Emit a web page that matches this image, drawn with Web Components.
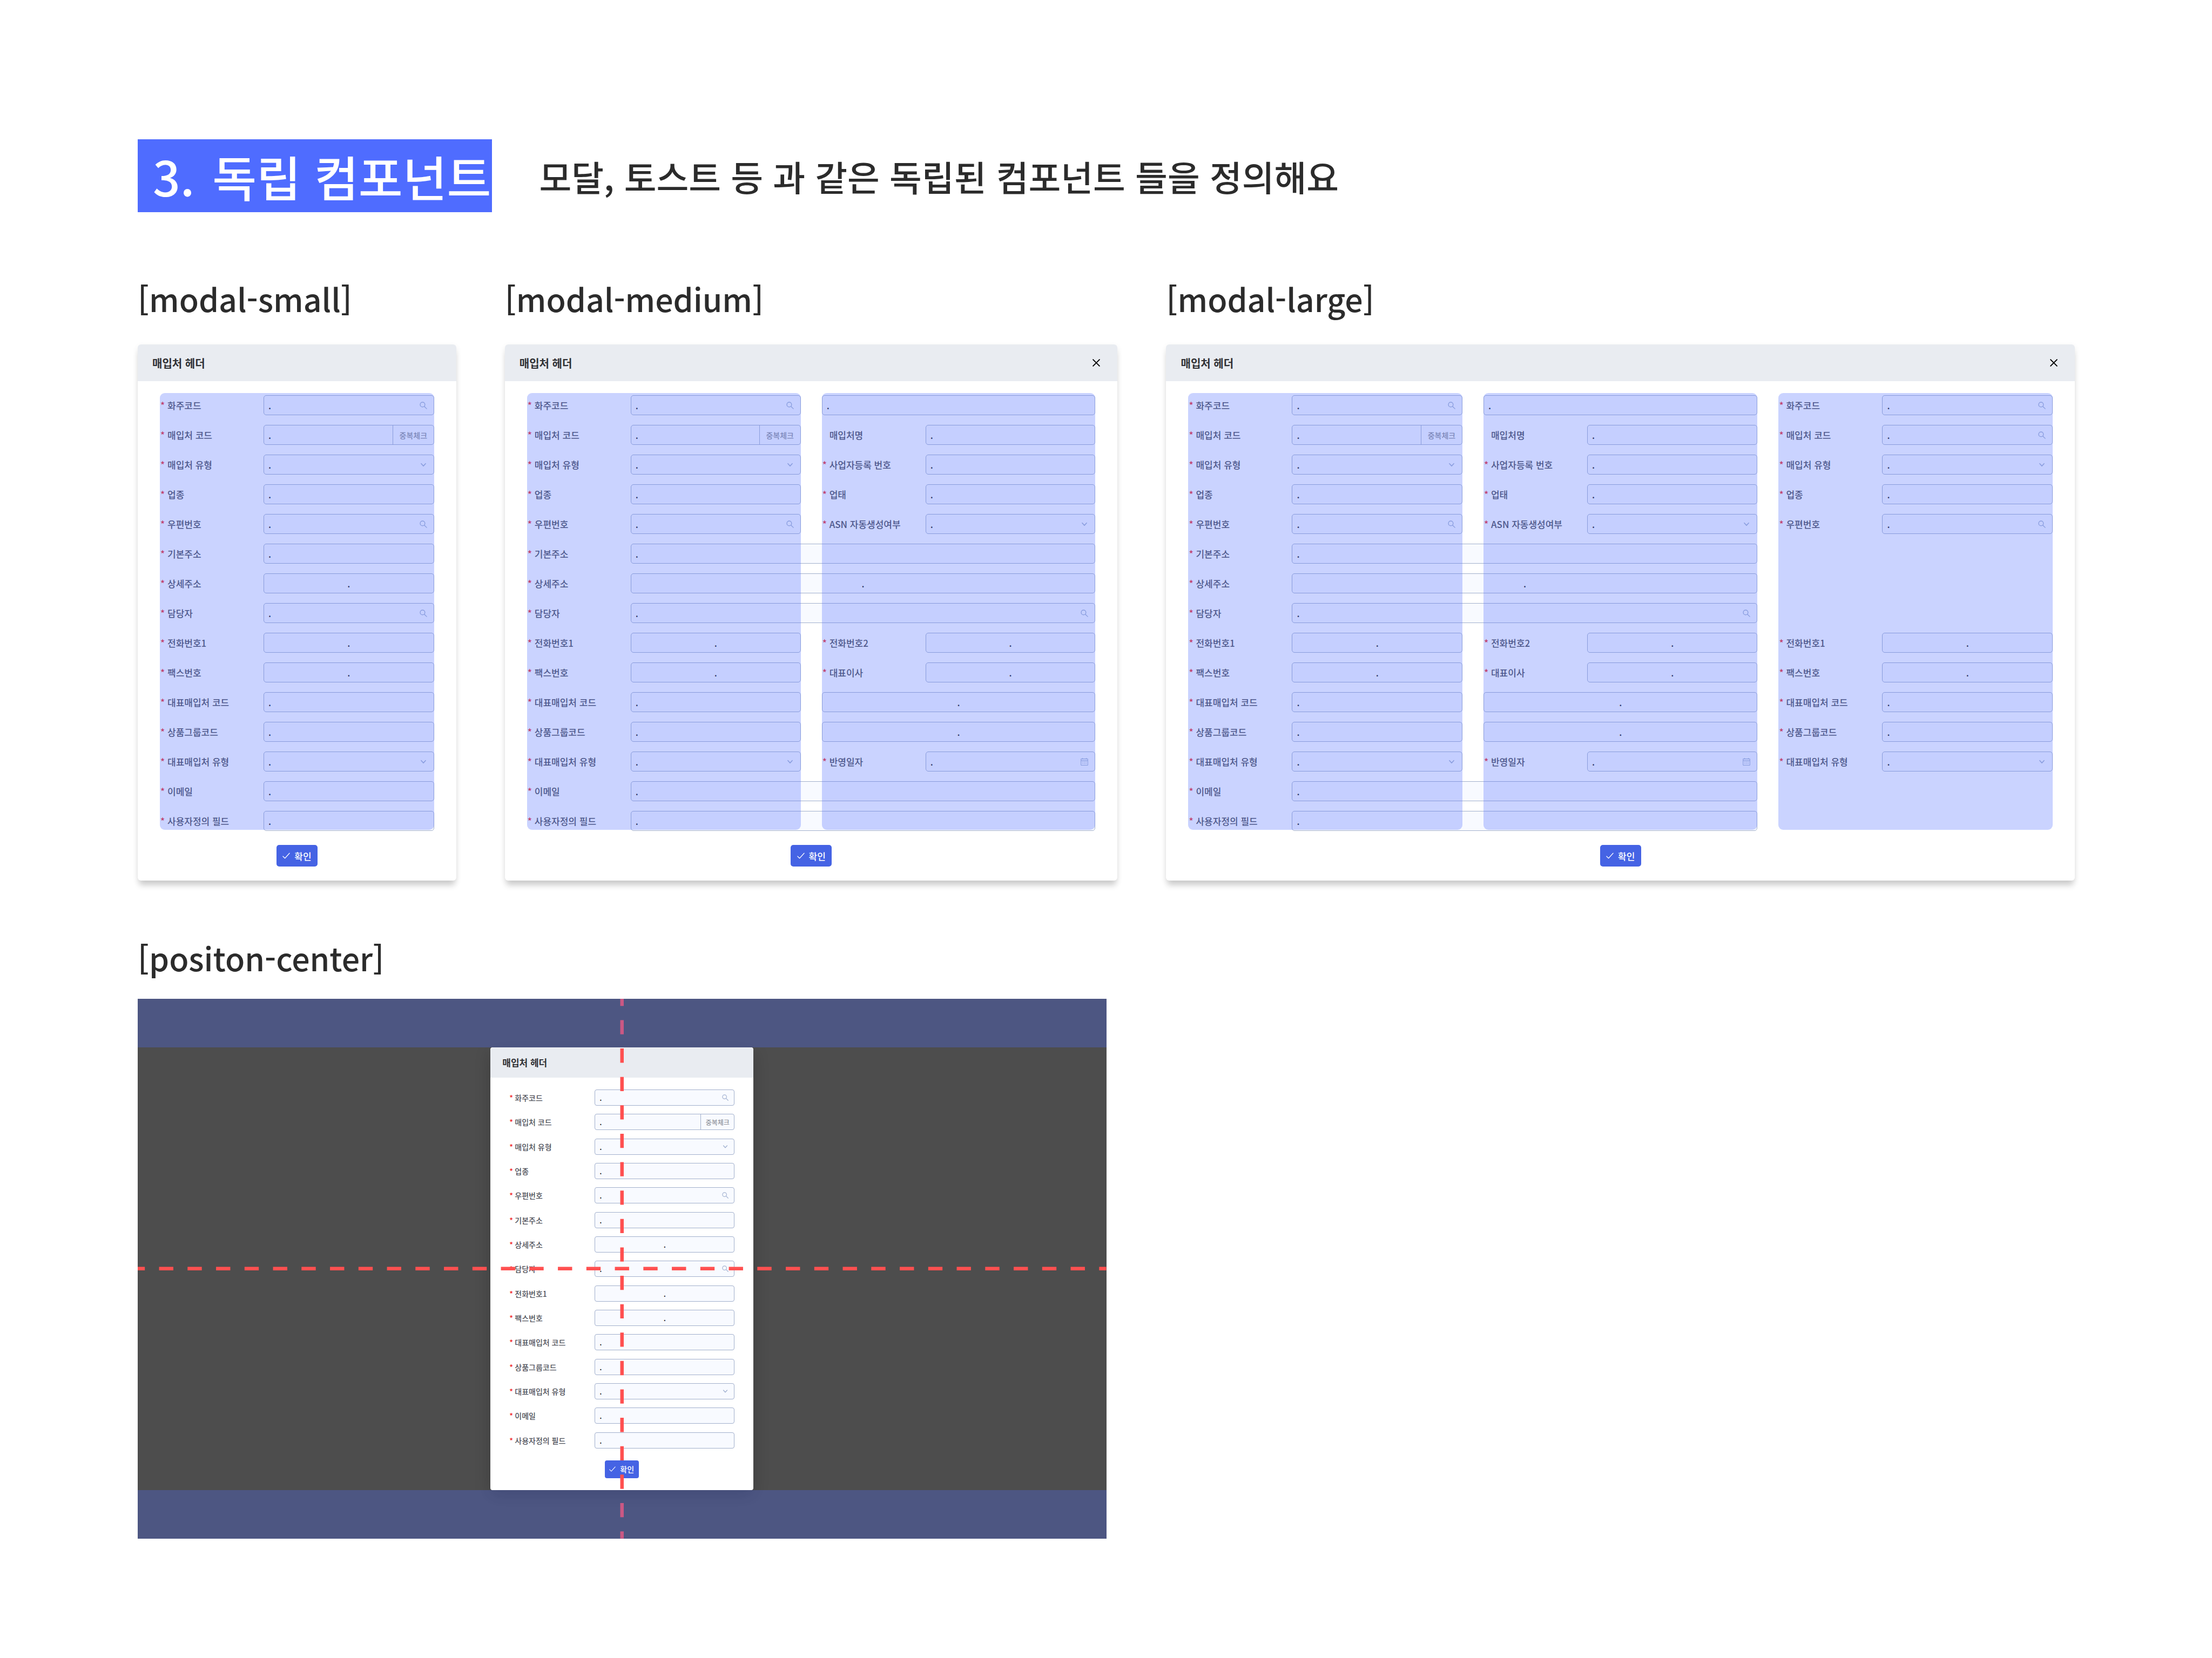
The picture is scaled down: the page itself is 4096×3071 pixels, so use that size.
<!DOCTYPE html>
<html lang="ko">
<head>
<meta charset="utf-8">
<title>독립 컴포넌트</title>
<style>
  html, body { margin: 0; background: #fff; }
  body { font-family: "Noto Sans CJK KR", "Noto Sans", sans-serif; font-weight: 500; color: #2b2b2b; }
</style>
</head>
<body>
<guide-page></guide-page>
<script>
const ICONS = {
  search: '<svg viewBox="0 0 16 16" fill="none" stroke="currentColor" stroke-width="1.6" stroke-linecap="round"><circle cx="6.2" cy="6.2" r="5"/><path d="M9.9 9.9 15 15"/></svg>',
  chevron: '<svg viewBox="0 0 16 16" fill="none" stroke="currentColor" stroke-width="1.9" stroke-linecap="round" stroke-linejoin="round"><path d="M3.4 5.4 8 10.4l4.600-5"/></svg>',
  calendar: '<svg viewBox="0 0 16 16" fill="none" stroke="currentColor" stroke-width="1.3"><rect x=".8" y="1.800" width="14.400" height="13.600" rx="1"/><path d="M1 5.600h14M4 0v2.600M12 0v2.600"/><path stroke-width="1.500" stroke-dasharray="1.500 2" d="M3.800 8.600h9M3.800 12h9"/></svg>',
  check: '<svg viewBox="0 0 16 16" fill="none" stroke="currentColor" stroke-width="1.400" stroke-linecap="round" stroke-linejoin="round"><path d="M1 9.200 5.200 13.400 15 2.600"/></svg>',
  close: '<svg viewBox="0 0 16 16" fill="none" stroke="currentColor" stroke-width="2.200" stroke-linecap="round"><path d="M1.300 1.300 14.700 14.700M14.700 1.300 1.300 14.700"/></svg>'
};

/* Column descriptions: [row, label, kind, options] */
const FIRST = [
  [1, '화주코드', 'search'], [2, '매입처 코드', 'check'], [3, '매입처 유형', 'select'],
  [4, '업종', 'text'], [5, '우편번호', 'search'],
  [6, '기본주소', 'text', 'wide'], [7, '상세주소', 'text', 'wide center'], [8, '담당자', 'search', 'wide'],
  [9, '전화번호1', 'text', 'center'], [10, '팩스번호', 'text', 'center'],
  [11, '대표매입처 코드', 'text'], [12, '상품그룹코드', 'text'], [13, '대표매입처 유형', 'select'],
  [14, '이메일', 'text', 'wide'], [15, '사용자정의 필드', 'text', 'wide']
];
const SECOND = [
  [1, '', 'text'], [2, '매입처명', 'text', 'optional'], [3, '사업자등록 번호', 'text'],
  [4, '업태', 'text'], [5, 'ASN 자동생성여부', 'select'],
  [9, '전화번호2', 'text', 'center'], [10, '대표이사', 'text', 'center'],
  [11, '', 'text', 'center'], [12, '', 'text', 'center'], [13, '반영일자', 'calendar']
];
const THIRD = [
  [1, '화주코드', 'search'], [2, '매입처 코드', 'search'], [3, '매입처 유형', 'select'],
  [4, '업종', 'text'], [5, '우편번호', 'search'],
  [9, '전화번호1', 'text', 'center'], [10, '팩스번호', 'text', 'center'],
  [11, '대표매입처 코드', 'text'], [12, '상품그룹코드', 'text'], [13, '대표매입처 유형', 'select']
];

class FormField extends HTMLElement {
  connectedCallback() {
    const name = this.getAttribute('label');
    const kind = this.getAttribute('kind');
    const tone = this.hasAttribute('center') ? ' class="center"' : '';
    const aria = name ? '' : ' aria-label="추가 입력"';
    const control = kind === 'select'
      ? `<select id="c"${tone}><option>.</option></select>`
      : `<input id="c" type="text" value="."${tone}${aria}>`;
    const extra = kind === 'search' ? `<span class="icon">${ICONS.search}</span>`
      : kind === 'select' ? `<span class="icon">${ICONS.chevron}</span>`
      : kind === 'calendar' ? `<span class="icon">${ICONS.calendar}</span>`
      : kind === 'check' ? '<button type="button">중복체크</button>' : '';
    const star = this.hasAttribute('optional') ? '' : '*';
    this.attachShadow({ mode: 'open' }).innerHTML = `
      <style>
        :host { display: flex; min-width: 0; font-size: var(--fs); }
        label { flex: none; width: var(--label-w); display: flex; align-items: center; color: #4e5059; white-space: nowrap; }
        label span { flex: none; width: var(--star-w); color: #f02b2b; padding-left: 1px; box-sizing: border-box; }
        .box { flex: 1; min-width: 0; height: var(--row-h); box-sizing: border-box; display: flex; align-items: center;
               border: 1px solid #a2b0cc; border-radius: var(--radius); background: #f8faff; overflow: hidden; }
        input, select { flex: 1; min-width: 0; height: 100%; box-sizing: border-box; margin: 0; padding: 0 8px; border: 0;
               background: none; font: inherit; color: #26262c; appearance: none; outline: 0; }
        .center { text-align: center; }
        .icon { flex: none; width: var(--icon); margin-right: var(--icon-gap); color: #a4b3d2; display: flex; }
        svg { width: 100%; display: block; }
        button { flex: none; width: var(--check-w); height: 100%; padding: 0; border: 0; border-left: 1px solid #a2b0cc;
               background: none; font: inherit; font-size: var(--fs-s); font-weight: 500; color: #8f929b; }
      </style>
      ${name ? `<label for="c"><span>${star}</span>${name}</label>` : ''}
      <div class="box">${control}${extra}</div>`;
  }
}
customElements.define('form-field', FormField);

class ModalCard extends HTMLElement {
  connectedCallback() {
    const cols = Number(this.getAttribute('columns') || 1);
    const sets = [FIRST, SECOND, THIRD].slice(0, cols);
    const fields = sets.map((set, c) => set.map(([row, label, kind, opts = '']) => {
      const span = opts.includes('wide') && cols > 1 ? ' / span 2' : '';
      return `<form-field label="${label}" kind="${kind}" ${opts} style="grid-row:${row};grid-column:${c + 1}${span}"></form-field>`;
    }).join('')).join('');
    const guides = this.hasAttribute('guides')
      ? `<div class="guides" aria-hidden="true">${'<i></i>'.repeat(cols)}</div>` : '';
    this.attachShadow({ mode: 'open' }).innerHTML = `
      <style>
        :host { --fs: 17px; --fs-s: 14px; --fs-h: 20px; --label-w: 192px; --star-w: 14px; --row-h: 37px; --row-gap: 18px;
                --icon: 14px; --icon-gap: 12px; --check-w: 76px; --radius: 5px; --head: 68px; --pad: 41px; --pad-r: 41px;
                --head-pad: 27px; --top: 26px; --btn-w: 76px; --btn-h: 40px; --foot: 26px; --check: 14px;
                display: flex; flex-direction: column; border-radius: 6px; background: #fff;
                box-shadow: 0 12px 12px -3px rgba(0,0,0,.16), 0 4px 12px rgba(0,0,0,.08); }
        :host([compact]) { --fs: 14px; --fs-s: 12px; --fs-h: 17px; --label-w: 159px; --star-w: 11px; --row-h: 30px; --row-gap: 15px;
                --icon: 12px; --icon-gap: 10px; --check-w: 62px; --radius: 4px; --head: 56px; --pad: 34px; --pad-r: 35px;
                --head-pad: 22px; --top: 22px; --btn-w: 63px; --btn-h: 33px; --foot: 22px; --check: 12px;
                border-radius: 4px; box-shadow: 0 10px 30px rgba(0,0,0,.2); }
        header { flex: none; height: var(--head); box-sizing: border-box; padding: 0 32px 0 var(--head-pad); display: flex;
                align-items: center; justify-content: space-between; background: #e9ecf1; border-radius: 6px 6px 0 0; }
        h3 { margin: 0; font-size: var(--fs-h); font-weight: 700; color: #2f3034; }
        .close { width: 14px; height: 14px; padding: 0; border: 0; background: none; color: #000; display: block; }
        form { flex: 1; display: flex; flex-direction: column; padding: var(--top) var(--pad-r) var(--foot) var(--pad); }
        .rows { flex: 1; position: relative; display: grid; grid-template-columns: repeat(${cols}, minmax(0, 1fr));
                grid-template-rows: repeat(15, var(--row-h)); gap: var(--row-gap) 39px; align-content: start; }
        :host([compact]) .rows { align-content: space-between; row-gap: 0; }
        .guides { position: absolute; inset: -4px 0 2px; display: grid; grid-template-columns: inherit; gap: 39px; pointer-events: none; }
        .guides i { background: rgba(79,108,255,.3); border-radius: 9px; }
        .ok { align-self: center; margin-top: var(--foot); width: var(--btn-w); height: var(--btn-h); padding: 0; border: 0;
                border-radius: var(--radius); background: #4563e4; color: #fff; font: inherit; font-size: var(--fs);
                display: flex; align-items: center; justify-content: center; gap: 8px; }
        .ok svg { width: var(--check); }
        svg { display: block; }
      </style>
      <header><h3>매입처 헤더</h3>${this.hasAttribute('closable') ? `<button class="close" type="button" aria-label="닫기">${ICONS.close}</button>` : ''}</header>
      <form>
        <div class="rows">${fields}${guides}</div>
        <button class="ok" type="button">${ICONS.check}확인</button>
      </form>`;
  }
}
customElements.define('modal-card', ModalCard);

class SpecBlock extends HTMLElement {
  connectedCallback() {
    this.attachShadow({ mode: 'open' }).innerHTML = `
      <style>
        :host { display: flex; flex-direction: column; gap: var(--gap, 45px); min-width: 0; }
        h2 { margin: 0; font-size: 59px; line-height: 80px; font-weight: 500; white-space: nowrap; }
      </style>
      <h2>${this.getAttribute('name')}</h2><slot></slot>`;
  }
}
customElements.define('spec-block', SpecBlock);

class CenterStage extends HTMLElement {
  connectedCallback() {
    this.attachShadow({ mode: 'open' }).innerHTML = `
      <style>
        :host { position: relative; width: 50%; aspect-ratio: 1794 / 1000; display: grid; overflow: hidden;
                grid-template: 9fr 82fr 9fr / 1fr 487px 1fr; background: #4d4d4d; }
        slot { display: contents; }
        ::slotted(*) { grid-area: 2 / 2; }
        svg { position: absolute; inset: 0; width: 100%; height: 100%; }
        line { stroke: #ff5050; stroke-width: 6.500; stroke-dasharray: 1 1; stroke-dashoffset: .5; }
        i { background: rgba(79,108,255,.3); z-index: 1; }
        .top { grid-area: 1 / 1 / 2 / 4; }
        .bottom { grid-area: 3 / 1 / 4 / 4; }
      </style>
      <slot></slot>
      <svg aria-hidden="true"><line x1="0" y1="50%" x2="100%" y2="50%" pathLength="68"/><line x1="50%" y1="0" x2="50%" y2="100%" pathLength="38"/></svg>
      <i class="top"></i><i class="bottom"></i>`;
  }
}
customElements.define('center-stage', CenterStage);

class GuidePage extends HTMLElement {
  connectedCallback() {
    this.attachShadow({ mode: 'open' }).innerHTML = `
      <style>
        :host { display: block; box-sizing: border-box; padding: 258px 254px 221px 255px; }
        .title { display: flex; align-items: center; gap: 87px; }
        h1 { margin: 0; padding: 0 2px 0 28px; background: #4f6cff; color: #fff; font-size: 89px; line-height: 135px;
             font-weight: 500; white-space: nowrap; }
        h1 span { margin-right: 8px; }
        p { margin: 0; font-size: 65px; line-height: 96px; white-space: nowrap; }
        .modals { margin-top: 120px; display: grid; grid-template-columns: 590fr 1135fr 1683fr; gap: 90px; }
        .position { margin-top: 103px; --gap: 36px; }
      </style>
      <div class="title"><h1><span>3.</span> 독립 컴포넌트</h1><p>모달, 토스트 등 과 같은 독립된 컴포넌트 들을 정의해요</p></div>
      <div class="modals">
        <spec-block name="[modal-small]"><modal-card columns="1" guides></modal-card></spec-block>
        <spec-block name="[modal-medium]"><modal-card columns="2" guides closable></modal-card></spec-block>
        <spec-block name="[modal-large]"><modal-card columns="3" guides closable></modal-card></spec-block>
      </div>
      <spec-block class="position" name="[positon-center]"><center-stage><modal-card columns="1" compact></modal-card></center-stage></spec-block>`;
  }
}
customElements.define('guide-page', GuidePage);
</script>
</body>
</html>
